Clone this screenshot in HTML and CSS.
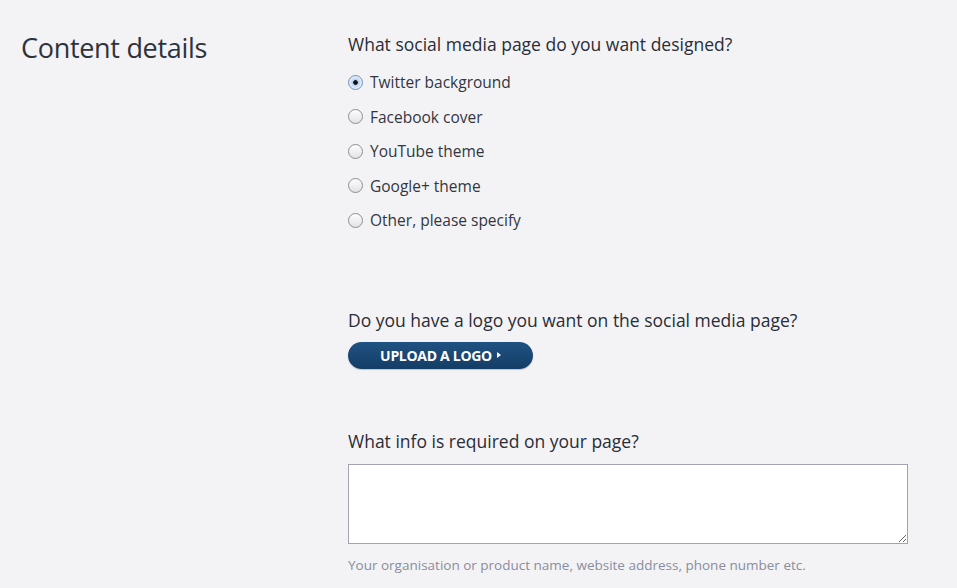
FILE: index.html
```html
<!DOCTYPE html>
<html>
<head>
<meta charset="utf-8">
<link rel="stylesheet" href="styles.css">
</head>
<body>
<div class="page">
  <div class="side">
    <h1 class="title">Content details</h1>
  </div>
  <div class="main">
    <section class="group">
      <h2 class="question">What social media page do you want designed?</h2>
      <ul class="options">
        <li class="option"><span class="radio checked"></span><span class="label">Twitter background</span></li>
        <li class="option"><span class="radio"></span><span class="label">Facebook cover</span></li>
        <li class="option"><span class="radio"></span><span class="label">YouTube theme</span></li>
        <li class="option"><span class="radio"></span><span class="label">Google+ theme</span></li>
        <li class="option"><span class="radio"></span><span class="label">Other, please specify</span></li>
      </ul>
    </section>
    <section class="group logo-group">
      <h2 class="question">Do you have a logo you want on the social media page?</h2>
      <button class="upload">UPLOAD A LOGO <span class="arrow"></span></button>
    </section>
    <section class="group info-group">
      <h2 class="question">What info is required on your page?</h2>
      <textarea class="info"></textarea>
      <p class="hint">Your organisation or product name, website address, phone number etc.</p>
    </section>
  </div>
</div>
</body>
</html>
```
FILE: styles.css
```css
html, body {
  margin: 0;
  padding: 0;
  background: #f3f3f6;
}
body {
  font-family: "Open Sans", "Noto Sans", sans-serif;
  color: #30333b;
}
.page {
  display: flex;
  width: 957px;
  height: 588px;
  overflow: hidden;
}
.side {
  width: 327px;
  padding-left: 21px;
}
.title {
  margin: 30px 0 0;
  font-size: 27px;
  font-weight: 400;
  line-height: 36px;
  letter-spacing: -0.3px;
  color: #2f323a;
}
.main {
  width: 560px;
  display: flex;
  flex-direction: column;
}
.question {
  margin: 0;
  font-size: 17.5px;
  font-weight: 500;
  line-height: 24px;
  color: #2a2d35;
}
.group {
  padding-top: 32px;
}
.options {
  list-style: none;
  margin: 9px 0 0;
  padding: 0;
}
.option {
  display: flex;
  align-items: center;
  gap: 7px;
  height: 34.5px;
}
.radio {
  width: 15px;
  height: 15px;
  border-radius: 50%;
  border: 1px solid #8e8e92;
  background: linear-gradient(#fdfdfd, #e3e3e6);
  box-sizing: border-box;
  flex: none;
}
.radio.checked {
  border-color: #6c8fb8;
  background: radial-gradient(circle, #0d1420 0 2px, #b9cfe9 2.6px, #eaf2fb 6.5px);
}
.label {
  font-size: 15.5px;
  color: #33363d;
}
.logo-group {
  padding-top: 70px;
}
.upload {
  margin-top: 10px;
  display: flex;
  align-items: center;
  justify-content: center;
  gap: 5px;
  width: 185px;
  height: 27px;
  padding: 0;
  border: none;
  border-radius: 14px;
  background: linear-gradient(#1f5282, #143d66);
  box-shadow: 0 1px 1px rgba(0,0,0,0.2);
  color: #fff;
  font-family: "Open Sans", sans-serif;
  font-size: 14px;
  font-weight: 700;
  letter-spacing: -0.3px;
}
.arrow {
  width: 0;
  height: 0;
  border-top: 3.5px solid transparent;
  border-bottom: 3.5px solid transparent;
  border-left: 4px solid #fff;
}
.info-group {
  padding-top: 60px;
}
.info {
  display: block;
  margin-top: 11px;
  width: 560px;
  height: 80px;
  box-sizing: border-box;
  border: 1px solid #a2a4b4;
  background: #fff;
  border-radius: 0;
  resize: vertical;
}
.hint {
  margin: 12px 0 0;
  font-size: 13.5px;
  color: #8a8d9b;
}
```
